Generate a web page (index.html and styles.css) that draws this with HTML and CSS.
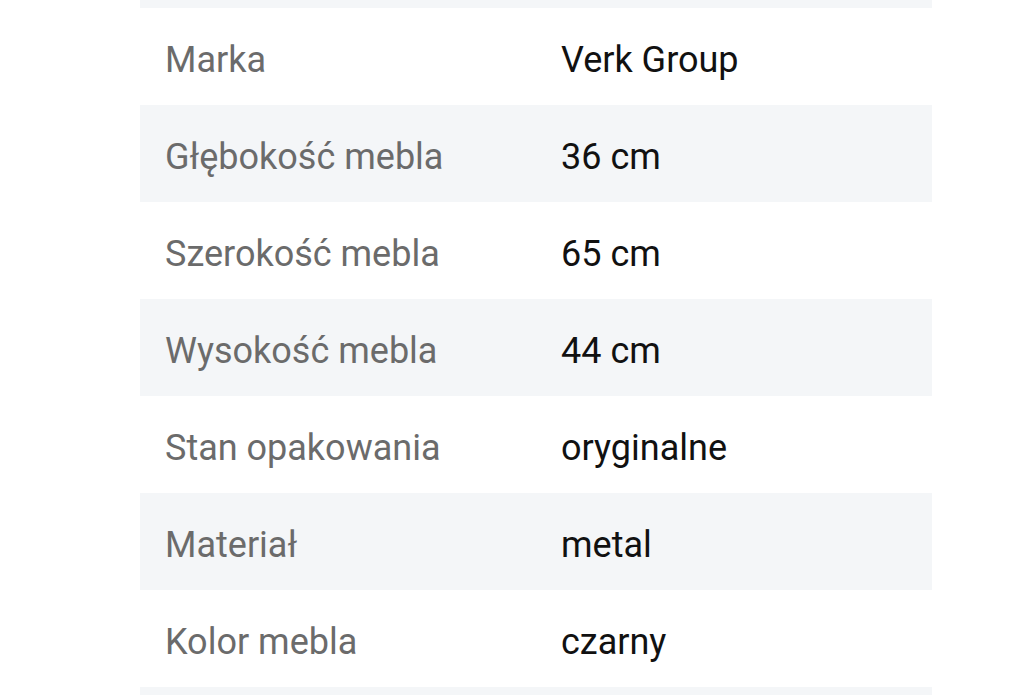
FILE: index.html
```html
<!DOCTYPE html>
<html lang="pl">
<head>
<meta charset="utf-8">
<link rel="stylesheet" href="styles.css">
</head>
<body>
<div class="specs">
  <div class="row alt edge"></div>
  <div class="row"><div class="label">Marka</div><div class="value">Verk Group</div></div>
  <div class="row alt"><div class="label">Głębokość mebla</div><div class="value">36 cm</div></div>
  <div class="row"><div class="label">Szerokość mebla</div><div class="value">65 cm</div></div>
  <div class="row alt"><div class="label">Wysokość mebla</div><div class="value">44 cm</div></div>
  <div class="row"><div class="label">Stan opakowania</div><div class="value">oryginalne</div></div>
  <div class="row alt"><div class="label">Materiał</div><div class="value">metal</div></div>
  <div class="row"><div class="label">Kolor mebla</div><div class="value">czarny</div></div>
  <div class="row alt"></div>
</div>
</body>
</html>
```
FILE: styles.css
```css
html, body {
  margin: 0;
  padding: 0;
  background: #ffffff;
  overflow: hidden;
}
body {
  font-family: Roboto, "Liberation Sans", sans-serif;
}
.specs {
  width: 792px;
  margin-left: 140px;
  display: flex;
  flex-direction: column;
}
.row {
  box-sizing: border-box;
  height: 97px;
  padding-top: 6px;
  display: flex;
  align-items: center;
  font-size: 36px;
  line-height: 40px;
}
.row.edge {
  height: 8px;
  padding-top: 0;
}
.row.alt {
  background: #f4f6f8;
}
.label {
  width: 396px;
  padding-left: 25px;
  color: #6b6b6b;
}
.value {
  color: #111111;
}
```
